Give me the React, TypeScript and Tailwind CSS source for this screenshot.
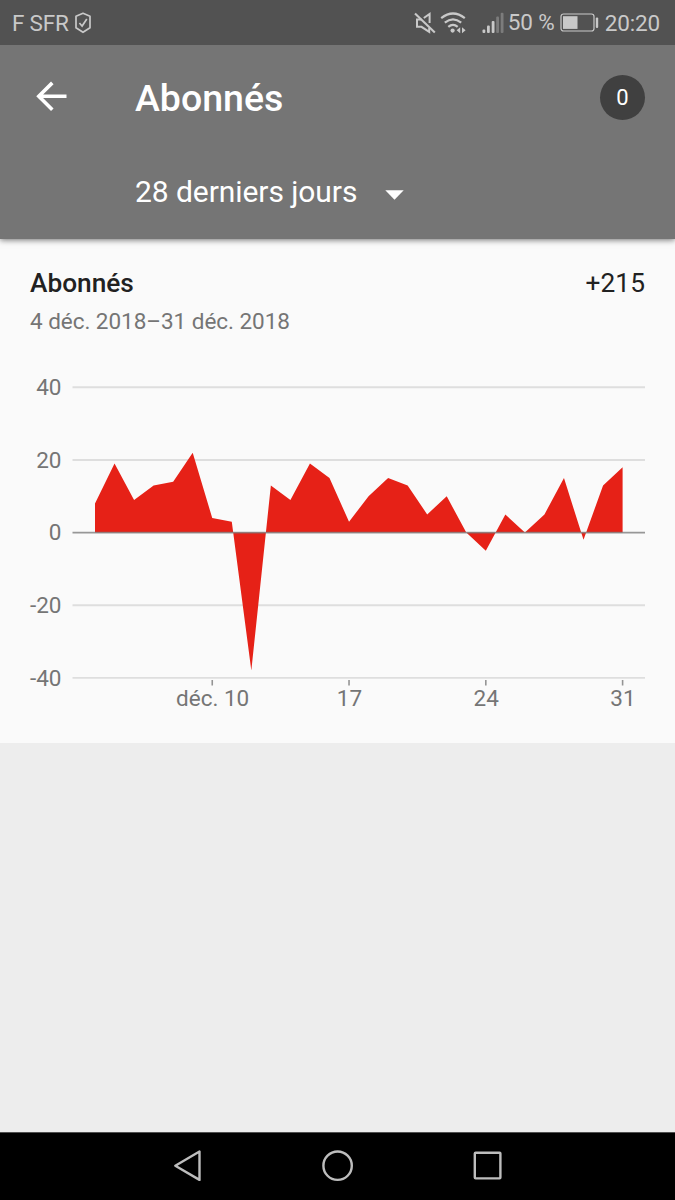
import type { ReactNode } from 'react';

const VALUES = [
  8, 19, 9, 13, 14, 22, 4, 3, -38, 13, 9, 19, 15, 3, 10, 15, 13, 5, 10, 0, -5, 5, 0, 5, 15, -2, 13, 18,
];
const Y_TICKS = [40, 20, 0, -20, -40];
const X_TICKS = [
  { index: 6, label: 'déc. 10' },
  { index: 13, label: '17' },
  { index: 20, label: '24' },
  { index: 27, label: '31' },
];

const xAt = (index: number) => 95 + (index * 527.6) / 27;
const yAt = (value: number) => 191.6 - value * 3.632;

function MuteIcon() {
  return (
    <svg className="h-[22px] w-[22px]" viewBox="0 0 22 22" fill="none" stroke="#c9c9c9" strokeWidth="2">
      <path d="M7.5 7.6H3v7.2h4.5l7.7 5v-3.8" />
      <path d="M9.8 6l5.8-4v9" />
      <path d="M1 1.5l19.8 19" strokeWidth="2.1" />
    </svg>
  );
}

function WifiIcon() {
  return (
    <svg className="h-[22px] w-[26px]" viewBox="0 0 26 22" fill="none" stroke="#c9c9c9" strokeWidth="2.2">
      <path d="M1.2 6.2Q13 -3.2 24.8 6.2" />
      <path d="M4.8 10.6Q13 4 21.2 10.6" />
      <path d="M8.3 14.8Q13 10.8 17.7 14.8" />
      <circle cx="12.6" cy="18.6" r="2.1" fill="#c9c9c9" stroke="none" />
      <path d="M20.2 15.2v6l-3.6-3zM22 15.2v6l3.6-3z" fill="#c9c9c9" stroke="none" />
    </svg>
  );
}

function SignalIcon() {
  return (
    <svg className="h-[22px] w-[22px]" viewBox="0 0 22 22" fill="#c9c9c9">
      <rect x="0.5" y="17.5" width="2.8" height="3.5" rx="1" />
      <rect x="5" y="13.5" width="2.8" height="7.5" rx="1" />
      <rect x="9.7" y="9" width="2.8" height="12" rx="1" />
      <rect x="14.2" y="4.5" width="2.8" height="16.5" rx="1" fill="#7c7c7c" />
      <rect x="18.7" y="0.8" width="2.8" height="20.2" rx="1" fill="#7c7c7c" />
    </svg>
  );
}

function StatusBar() {
  return (
    <div className="relative z-10 flex h-[45px] items-center bg-[#525252] pl-[12px] pr-[15px] text-[22.5px] leading-[47px] text-[#c9c9c9]">
      <span className="pt-[2px] tracking-[-0.2px]">F SFR</span>
      <svg className="ml-[5.5px] h-[22px] w-[18px]" viewBox="0 0 18 22" fill="none" stroke="#c9c9c9" strokeWidth="1.7">
        <path d="M9 1.3l7 2.9v11.6L9 20.3l-7-4.5V4.2z" strokeLinejoin="round" />
        <path d="M5.4 11l2.7 3 4.7-7" />
      </svg>
      <div className="ml-auto flex items-center">
        <MuteIcon />
        <div className="ml-[4px] flex">
          <WifiIcon />
        </div>
        <div className="ml-[16px] flex">
          <SignalIcon />
        </div>
        <span className="ml-[4px] leading-[43px] tracking-[-0.1px]">50 %</span>
        <svg className="ml-[5.5px] h-[20px] w-[39px]" viewBox="0 0 39 20" fill="none">
          <rect x="1" y="1" width="33" height="17" rx="2.5" stroke="#c9c9c9" strokeWidth="1.2" />
          <rect x="3" y="3.2" width="14.5" height="12.7" fill="#c9c9c9" />
          <rect x="35.8" y="4.5" width="2.4" height="10.5" rx="1" fill="#c9c9c9" />
        </svg>
        <span className="ml-[5.5px] pt-[2px] tracking-[-0.15px]">20:20</span>
      </div>
    </div>
  );
}

function Header() {
  return (
    <header className="relative h-[194px] bg-[#757575] text-white shadow-[0_1px_6px_rgba(0,0,0,0.55)]">
      <div className="flex h-[104px] items-center pl-[36px] pr-[30px]">
        <svg className="mb-[2px] h-[30px] w-[31px]" viewBox="0 0 31 30" fill="none" stroke="#fff" strokeWidth="3.6">
          <path d="M30.5 15.3H3M16.3 1.9L2.8 15.3l13.5 13.4" />
        </svg>
        <h1 className="ml-[68px] pt-px text-[37.5px] font-medium leading-[44px]">Abonnés</h1>
        <div className="ml-auto flex h-[45px] w-[45px] items-center justify-center rounded-full bg-[#404040] pt-px text-[22px]">
          0
        </div>
      </div>
      <div className="flex h-[84px] items-center pl-[135px]">
        <span className="w-[222px] whitespace-nowrap text-[30px] tracking-[-0.07px]">28 derniers jours</span>
        <svg className="ml-[28px] mt-[8px] h-[10px] w-[19px]" viewBox="0 0 19 10" fill="#fff">
          <path d="M0.3 0.3h18.4L9.5 9.7z" />
        </svg>
      </div>
    </header>
  );
}

function AreaChart() {
  const line = VALUES.map((value, i) => `${xAt(i)},${yAt(value)}`).join(' ');
  return (
    <svg className="block h-[402px] w-full text-[22.5px]" viewBox="0 0 675 402" fill="#757575">
      {Y_TICKS.map((tick) => (
        <g key={tick}>
          {tick !== 0 && (
            <line x1="72.5" x2="645" y1={yAt(tick)} y2={yAt(tick)} stroke="#dedede" strokeWidth="1.9" />
          )}
          <text x="61.5" y={yAt(tick) + 7.7} textAnchor="end">
            {tick}
          </text>
        </g>
      ))}
      <polygon points={`${xAt(0)},${yAt(0)} ${line} ${xAt(27)},${yAt(0)}`} fill="#e62117" />
      <line x1="72.5" x2="645" y1={yAt(0)} y2={yAt(0)} stroke="#757575" strokeOpacity="0.75" strokeWidth="1.6" />
      {X_TICKS.map((tick) => (
        <g key={tick.label}>
          <line x1={xAt(tick.index)} x2={xAt(tick.index)} y1="339" y2="344.5" stroke="#949494" strokeWidth="1.6" />
          <text x={xAt(tick.index) + 0.4} y="365.3" textAnchor="middle">
            {tick.label}
          </text>
        </g>
      ))}
    </svg>
  );
}

function NavIcon({ children }: { children: ReactNode }) {
  return (
    <svg className="h-[36px] w-[36px]" viewBox="0 0 36 36" fill="none" stroke="#bdbdbd" strokeWidth="2.4" strokeLinejoin="round">
      {children}
    </svg>
  );
}

export default function App() {
  return (
    <div className="flex h-[1200px] w-[675px] flex-col overflow-hidden bg-[#ededed] font-['Roboto',sans-serif]">
      <StatusBar />
      <Header />
      <section className="h-[504px] bg-[#fafafa] pt-[26px]">
        <div className="flex h-[38px] items-center justify-between px-[30px] text-[26.25px] text-[#212121]">
          <h2 className="font-medium">Abonnés</h2>
          <span className="tracking-[0.1px]">+215</span>
        </div>
        <p className="h-[38px] px-[30px] text-[22.5px] leading-[36px] tracking-[-0.04px] text-[#757575]">
          4 déc. 2018–31 déc. 2018
        </p>
        <AreaChart />
      </section>
      <nav className="mt-auto flex h-[68px] items-center justify-center gap-[114px] border-t border-[#505050] bg-black pb-px">
        <NavIcon>
          <path d="M5.3 17.7L29.5 3.5v28.4z" />
        </NavIcon>
        <NavIcon>
          <circle cx="17.6" cy="17.7" r="14.2" />
        </NavIcon>
        <NavIcon>
          <rect x="4.8" y="4.8" width="25.6" height="25.6" rx="0.8" />
        </NavIcon>
      </nav>
    </div>
  );
}
